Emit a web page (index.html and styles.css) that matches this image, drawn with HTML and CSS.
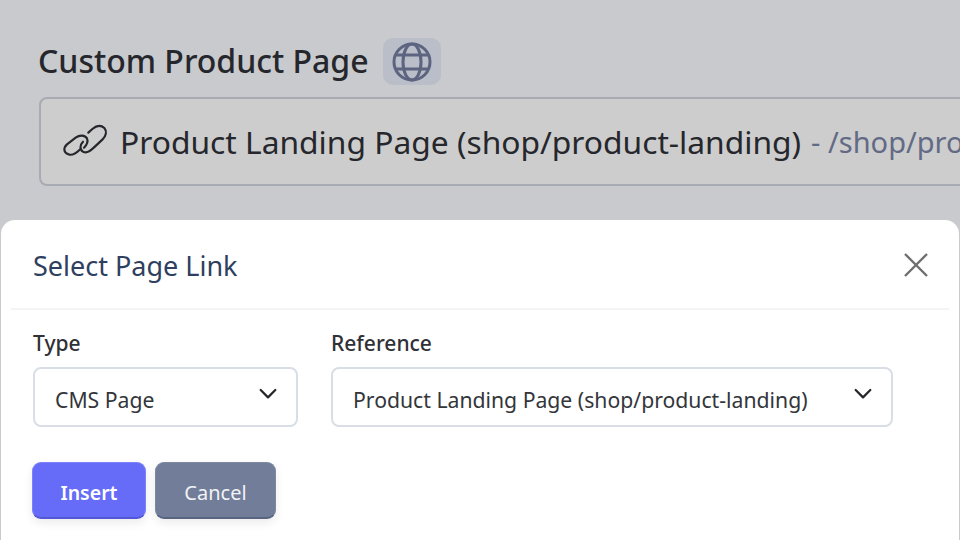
FILE: index.html
```html
<!DOCTYPE html>
<html lang="en">
<head>
<meta charset="utf-8">
<title>Select Page Link</title>
<link rel="stylesheet" href="styles.css">
</head>
<body>
<main class="page">
  <div class="heading-row">
    <h1 class="heading">Custom Product Page</h1>
    <span class="globe-badge">
      <svg class="globe" viewBox="0 0 40 40" fill="none" stroke="currentColor" stroke-width="3">
        <circle cx="20" cy="20" r="18"/>
        <ellipse cx="20" cy="20" rx="9" ry="18"/>
        <path d="M3.5 13h33M3.5 27h33"/>
      </svg>
    </span>
  </div>
  <div class="link-field">
    <svg class="link-icon" viewBox="0 0 180 135" fill="none" stroke="currentColor" stroke-width="6.500" stroke-linecap="round">
      <path d="M74 92C62 104 50 110 40 106C26 101 24 87 36 76L62 56C74 47 90 48 96 58C100 68 95 78 87 86"/>
      <path d="M84 68C74 78 74 92 84 98C94 103 106 96 114 88L142 62C154 50 156 36 148 27C138 18 124 20 112 30L100 41"/>
    </svg>
    <span class="link-title">Product Landing Page (shop/product-landing)</span>
    <span class="link-path">- /shop/product-landing</span>
  </div>
</main>
<section class="modal">
  <header class="modal-head">
    <h2 class="modal-title">Select Page Link</h2>
    <svg class="close" viewBox="0 0 24 24" fill="none" stroke="currentColor" stroke-width="2.400">
      <path d="M1 1l22 22M23 1L1 23"/>
    </svg>
  </header>
  <div class="fields">
    <div class="field field-type">
      <span class="label">Type</span>
      <div class="select">
        <span>CMS Page</span>
        <svg class="chevron" viewBox="0 0 16 10" fill="none" stroke="currentColor" stroke-width="2" stroke-linecap="round" stroke-linejoin="round"><path d="M1.500 1.500L8 8l6.500-6.500"/></svg>
      </div>
    </div>
    <div class="field field-ref">
      <span class="label">Reference</span>
      <div class="select">
        <span>Product Landing Page (shop/product-landing)</span>
        <svg class="chevron" viewBox="0 0 16 10" fill="none" stroke="currentColor" stroke-width="2" stroke-linecap="round" stroke-linejoin="round"><path d="M1.500 1.500L8 8l6.500-6.500"/></svg>
      </div>
    </div>
  </div>
  <div class="actions">
    <button class="btn btn-primary">Insert</button>
    <button class="btn btn-secondary">Cancel</button>
  </div>
</section>
</body>
</html>
```
FILE: styles.css
```css
* { box-sizing: border-box; }
html, body { margin: 0; height: 100%; }
body {
  width: 960px;
  height: 540px;
  overflow: hidden;
  position: relative;
  background: #c9cacd;
  font-family: "Noto Sans", "Open Sans", sans-serif;
}
.page { padding: 38px 0 0 38px; width: 1400px; }
.heading-row { display: flex; align-items: center; gap: 14px; height: 47px; }
.heading { margin: 0; font-size: 32px; font-weight: 500; color: #25272c; line-height: 45px; height: 47px; }
.globe-badge {
  width: 58px; height: 47px; border-radius: 10px; background: #babec9;
  display: flex; align-items: center; justify-content: center; color: #5d6480;
}
.globe { width: 40px; height: 40px; display: block; }
.link-field {
  margin-top: 12px; margin-left: 1px;
  height: 89px; border: 2px solid #a8abb3; border-radius: 8px; background: #cdcdcd;
  display: flex; align-items: center; padding-left: 14px; white-space: nowrap;
}
.link-icon { width: 60px; height: 45px; color: #25272c; margin-right: 5px; flex: none; }
.link-title { font-size: 31.75px; color: #25272c; }
.link-path { font-size: 29px; color: #626a85; margin-left: 10px; }
.modal {
  position: absolute; left: 1px; top: 220px; width: 958px; height: 320px;
  background: #fff; border-radius: 14px 14px 0 0;
}
.modal-head {
  margin: 0 10px; height: 90px; padding: 0 15px 0 22px; border-bottom: 2px solid #f3f4f6;
  display: flex; align-items: center; justify-content: space-between;
}
.modal-title { margin: 2px 0 0; font-size: 27px; font-weight: 400; color: #2f3f5f; }
.close { width: 24px; height: 24px; color: #6f6f6f; margin: 2px 6px 0 0; }
.fields { display: flex; gap: 33px; padding: 17px 0 0 32px; }
.field { display: flex; flex-direction: column; }
.field-type { width: 265px; }
.field-ref { width: 562px; }
.label { font-size: 21px; font-weight: 500; color: #2f3136; line-height: 32px; height: 40px; }
.select {
  height: 60px; border: 2px solid #d9dee6; border-radius: 8px;
  display: flex; align-items: center; justify-content: space-between;
  padding: 5px 19px 0 20px; font-size: 21.2px; color: #33363b; white-space: nowrap;
}
.chevron { width: 18px; height: 12px; color: #25272c; margin-bottom: 11px; }
.actions { display: flex; gap: 9px; padding: 35px 0 0 31px; }
.btn {
  height: 57px; border-radius: 9px; border: 0; font-family: inherit; font-size: 20px; color: #fff;
  box-shadow: 0 4px 10px rgba(0,0,0,.08); padding: 4px 0 0;
}
.btn-primary { width: 114px; background: #666cf7; font-size: 19.5px; font-weight: 600; border: 1px solid #7d82fa; border-bottom: 2px solid #5257d8; }
.btn-secondary { width: 121px; background: #717d99; font-weight: 400; border: 1px solid #7d88a1; border-bottom: 2px solid #596480; color: #f1f3f6; }
```
